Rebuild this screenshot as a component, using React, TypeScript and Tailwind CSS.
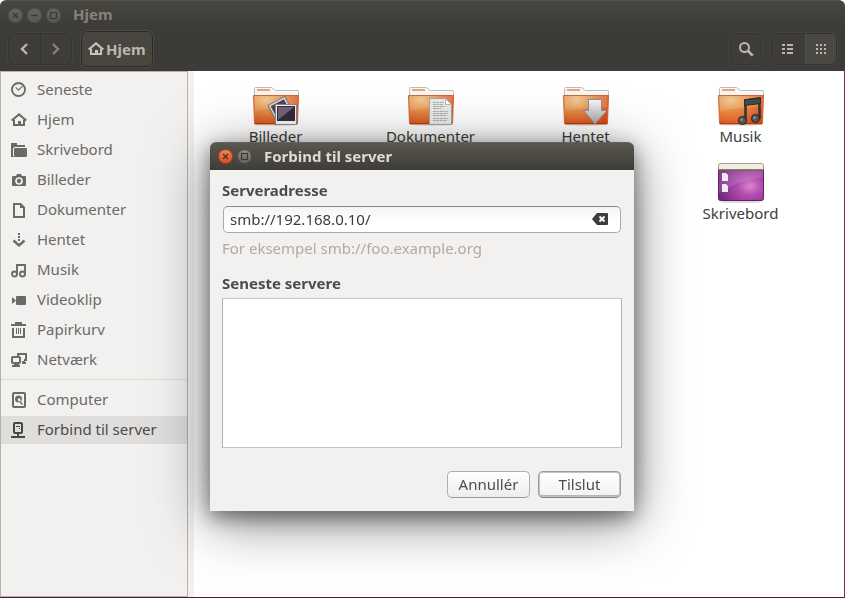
import { useState } from "react";
import type { ReactNode } from "react";

const INK = "#6a6a67";

function Glyph({ children, color = INK }: { children: ReactNode; color?: string }) {
  return (
    <svg width="16" height="16" viewBox="0 0 16 16" fill="none" stroke={color} strokeWidth="2" className="shrink-0" aria-hidden="true">
      {children}
    </svg>
  );
}

function HomeGlyph({ color = INK }: { color?: string }) {
  return (
    <Glyph color={color}>
      <path d="M.6 8.500 8 2.400l7.400 6.100" />
      <path d="M3 7.500V13h10V7.500" />
      <rect x="7" y="9" width="3" height="4" fill={color} stroke="none" />
    </Glyph>
  );
}

const glyphs = {
  recent: (
    <Glyph>
      <circle cx="7.500" cy="7.500" r="6.500" strokeWidth="1.900" />
      <path d="m4.700 5.300 2.800 2.800 4-4" strokeWidth="1.200" />
    </Glyph>
  ),
  home: <HomeGlyph />,
  folder: (
    <Glyph>
      <path d="M0 1h6v2h8v2H3v10H0z" fill={INK} stroke="none" />
      <rect x="3" y="6" width="13" height="9" rx="1" fill={INK} stroke="none" />
      <path d="M2.500 6v8" stroke="#f2f1f0" strokeWidth="1" />
    </Glyph>
  ),
  camera: (
    <Glyph>
      <path d="M2 4h3l1-2h4l1 2h3a1 1 0 0 1 1 1v8a1 1 0 0 1-1 1H2a1 1 0 0 1-1-1V5a1 1 0 0 1 1-1z" fill={INK} stroke="none" />
      <circle cx="8" cy="9" r="3" stroke="#f2f1f0" strokeWidth="1.700" />
    </Glyph>
  ),
  document: (
    <Glyph>
      <path d="M3 2h6.500L13 5.500V15H3z" />
      <path d="M9 1v5h5z" fill={INK} stroke="none" />
    </Glyph>
  ),
  download: (
    <Glyph>
      <path d="M7 1h2v2H7zM7 4h2v2H7zM7 7h2v2H7z" fill={INK} stroke="none" />
      <path d="m2.500 8.500 5.500 5 5.500-5" strokeWidth="2.400" />
    </Glyph>
  ),
  music: (
    <Glyph>
      <path d="M6 12V3h8v9M6 3h8" strokeWidth="1.900" />
      <circle cx="3.500" cy="12" r="2.500" strokeWidth="1.900" />
      <circle cx="11.500" cy="12" r="2.500" strokeWidth="1.900" />
    </Glyph>
  ),
  video: (
    <Glyph>
      <rect x="5" y="4" width="10" height="9" rx="1" fill={INK} stroke="none" />
      <path d="M1 5v7l4-3.500z" fill={INK} stroke="none" />
    </Glyph>
  ),
  trash: (
    <Glyph>
      <path d="M0 3h15M4 1h7" />
      <path d="M2 6v9h11V6" />
      <path d="M5.500 6v6M7.500 6v6M9.500 6v6" strokeWidth="1" />
    </Glyph>
  ),
  network: (
    <Glyph>
      <path d="M7 4V2h8v6h-2" />
      <rect x="1" y="5" width="8" height="6" rx="1" />
      <path d="M3 12h5v1h1v2H1v-2h2zM11 9h3v1h1v2h-4z" fill={INK} stroke="none" />
    </Glyph>
  ),
  computer: (
    <Glyph>
      <rect x="2" y="1" width="12" height="14" rx="1" />
      <circle cx="7.500" cy="7" r="3.500" fill={INK} stroke="none" />
      <circle cx="8" cy="7.500" r="1.200" fill="#f2f1f0" stroke="none" />
      <path d="m8 8 3.500 4.500" stroke="#f2f1f0" strokeWidth="2.600" />
      <path d="m8.500 9 3 3.500" strokeWidth="1.400" />
    </Glyph>
  ),
  server: (
    <Glyph color="#464643">
      <rect x="3" y="1" width="8" height="10" rx="1" />
      <path d="M5 4.500h4" strokeWidth="1" />
      <path d="M8 6h1v1H8z" fill="#464643" stroke="none" />
      <path d="M7 11v4M0 15h14" />
    </Glyph>
  ),
};

type GlyphName = keyof typeof glyphs;

const places: { label: string; glyph: GlyphName }[] = [
  { label: "Seneste", glyph: "recent" },
  { label: "Hjem", glyph: "home" },
  { label: "Skrivebord", glyph: "folder" },
  { label: "Billeder", glyph: "camera" },
  { label: "Dokumenter", glyph: "document" },
  { label: "Hentet", glyph: "download" },
  { label: "Musik", glyph: "music" },
  { label: "Videoklip", glyph: "video" },
  { label: "Papirkurv", glyph: "trash" },
  { label: "Netværk", glyph: "network" },
];

const devices: { label: string; glyph: GlyphName; active?: boolean }[] = [
  { label: "Computer", glyph: "computer" },
  { label: "Forbind til server", glyph: "server", active: true },
];

function PlaceRow({ label, glyph, active }: { label: string; glyph: GlyphName; active?: boolean }) {
  return (
    <li>
      <button
        type="button"
        className={`flex h-7 w-full items-center gap-2.5 pl-2.5 text-left ${active ? "bg-[#dfdedd] text-[#4a4a48]" : "text-[#6a6a67]"}`}
      >
        {glyphs[glyph]}
        <span className="pb-0.5">{label}</span>
      </button>
    </li>
  );
}

function WindowButton({ kind, tone }: { kind: "close" | "minimize" | "maximize"; tone: "dim" | "grey" | "orange" }) {
  const names = { close: "Luk", minimize: "Minimér", maximize: "Maksimér" };
  const fills = {
    dim: "from-[#66645e] to-[#5a5852] border-[#55534d]",
    grey: "from-[#8f8d85] to-[#66645d] border-[#4a4943]",
    orange: "from-[#f58059] to-[#de4a1c] border-[#a8401d]",
  };
  return (
    <button type="button" aria-label={names[kind]} className={`flex size-[15px] items-center justify-center rounded-full border bg-linear-to-b ${fills[tone]}`}>
      <svg width="13" height="13" viewBox="0 0 13 13" className="shrink-0" fill="none" stroke="#3a3934" strokeWidth="1.200" aria-hidden="true">
        {kind === "close" && <path d="m4 4 5 5m0-5-5 5" />}
        {kind === "minimize" && <path d="M3 6.500h7" />}
        {kind === "maximize" && <rect x="3.500" y="3.500" width="6" height="6" />}
      </svg>
    </button>
  );
}

function FolderArt({ id, children }: { id: string; children: ReactNode }) {
  return (
    <svg width="48" height="40" viewBox="0 0 48 40" aria-hidden="true">
      <defs>
        <radialGradient id={id} cx="0.28" cy="0.15" r="0.95">
          <stop offset="0" stopColor="#f2c183" />
          <stop offset="0.4" stopColor="#e58d47" />
          <stop offset="1" stopColor="#d9491a" />
        </radialGradient>
      </defs>
      <ellipse cx="24" cy="38.500" rx="22" ry="1.500" fill="#000" opacity=".12" />
      <path d="M2.500 10V2.500Q2.500 1.500 3.500 1.500h16l4 3H46q.5 0 .5 1V10z" fill="#f7f7f7" stroke="#bcbcbc" />
      <rect x="5" y="3" width="13" height="2" fill="#f0a070" />
      <path d="M1.500 9.500h45l-1 27.500q0 1-1 1h-41q-1 0-1-1z" fill={`url(#${id})`} stroke="#cf6632" />
      <path d="M2.500 10h43l-.5 11Q22 21 3 25z" fill="#fff" opacity=".13" />
      <path d="M3 37.500h42" stroke="#b03c10" />
      {children}
    </svg>
  );
}

function PicturesArt() {
  return (
    <FolderArt id="folder-pictures">
      <g transform="rotate(-28 27 22)">
        <rect x="18.500" y="14.500" width="19" height="19" fill="#d8d8d8" stroke="#777" />
        <rect x="20.500" y="16.500" width="15" height="13" fill="#54435a" />
      </g>
      <rect x="23.500" y="18.500" width="21" height="20" fill="#f6f6f6" stroke="#888" />
      <rect x="25" y="20" width="18" height="15" fill="#352c3b" />
      <path d="M26 21h16L26 34z" fill="#77617c" />
    </FolderArt>
  );
}

function DocumentsArt() {
  return (
    <FolderArt id="folder-documents">
      <path d="M22.500 12.500h16l6 6v20h-22z" fill="#e9e9e7" stroke="#a4a4a2" />
      <path d="m38.500 12.500 6 6h-6z" fill="#fff" stroke="#b6b6b4" />
      <path d="M26 16.500h11M26 18.500h10M26 20.500h12M26 22.500h8M26 25.500h15M26 27.500h15M26 29.500h14M26 32.500h15M26 34.500h14" stroke="#b0b0ae" strokeDasharray="3 .5" />
    </FolderArt>
  );
}

function DownloadsArt() {
  return (
    <FolderArt id="folder-downloads">
      <defs>
        <linearGradient id="arrow-down" x1="0" y1="0" x2="0" y2="1">
          <stop offset="0" stopColor="#f8f8f8" />
          <stop offset="1" stopColor="#a5a5a5" />
        </linearGradient>
      </defs>
      <path d="M26.500 13.500h13v11H45l-12 13.500-11.500-13.500h5z" fill="url(#arrow-down)" stroke="#8d8d8d" />
    </FolderArt>
  );
}

function MusicArt() {
  return (
    <FolderArt id="folder-music">
      <path d="M28.500 35V14.500L42.500 12.500V33" fill="none" stroke="#343434" strokeWidth="2.600" />
      <path d="M27.500 14 43.500 12v5.500l-16 2z" fill="#484848" stroke="#2a2a2a" />
      <circle cx="25.500" cy="34.500" r="4" fill="#555" stroke="#222" />
      <circle cx="38.500" cy="32.500" r="4" fill="#555" stroke="#222" />
      <circle cx="24.500" cy="33.500" r="1.500" fill="#8a8a8a" />
      <circle cx="37.500" cy="31.500" r="1.500" fill="#8a8a8a" />
    </FolderArt>
  );
}

function DesktopArt() {
  return (
    <svg width="48" height="40" viewBox="0 0 48 40" aria-hidden="true">
      <defs>
        <radialGradient id="desktop" cx="0.7" cy="0.6" r="0.75">
          <stop offset="0" stopColor="#d888c8" />
          <stop offset="0.35" stopColor="#b44db0" />
          <stop offset="1" stopColor="#6c2678" />
        </radialGradient>
      </defs>
      <ellipse cx="24" cy="38.800" rx="22" ry="1.200" fill="#000" opacity=".15" />
      <rect x="1.500" y="1.500" width="45" height="36" rx="2" fill="url(#desktop)" stroke="#6a1d6b" />
      <path d="M2 7h44v7Q22 17 2 30z" fill="#fff" opacity=".13" />
      <path d="M1.500 6.500v-4q0-2 2-2h41q2 0 2 2v4z" fill="#efeee0" stroke="#a3a18a" />
      <path d="M1 7h46" stroke="#6d5c48" />
      <path d="M5 10h4l2 2v6H5zM5 21h4l2 2v6H5z" fill="#efeaf0" />
    </svg>
  );
}

const files: { label: string; art: ReactNode; place?: string }[] = [
  { label: "Billeder", art: <PicturesArt /> },
  { label: "Dokumenter", art: <DocumentsArt /> },
  { label: "Hentet", art: <DownloadsArt /> },
  { label: "Musik", art: <MusicArt /> },
  { label: "Skrivebord", art: <DesktopArt />, place: "col-start-4" },
];

function Header() {
  return (
    <header className="rounded-t-md border-t border-[#55534d] bg-linear-to-b from-[#474640] to-[#3c3b37] to-40%">
      <div className="flex h-7 items-center gap-1 pl-2">
        <WindowButton kind="close" tone="dim" />
        <WindowButton kind="minimize" tone="dim" />
        <WindowButton kind="maximize" tone="dim" />
        <h1 className="pb-0.5 pl-2 font-bold text-[#85827a]">Hjem</h1>
      </div>
      <nav className="flex h-[42px] items-center gap-[9px] px-2 pb-0.5">
        <div className="flex h-8 w-16 divide-x divide-[#34332f] rounded-md border border-[#34332f] bg-[#3e3d39] shadow-[0_0_0_1px_#45443f]">
          <button type="button" aria-label="Tilbage" className="flex flex-1 items-center justify-center">
            <svg width="8" height="12" viewBox="0 0 8 12" fill="none" stroke="#bbb7ac" strokeWidth="2.400" aria-hidden="true"><path d="M7 1 2 6l5 5" /></svg>
          </button>
          <button type="button" aria-label="Frem" className="flex flex-1 items-center justify-center">
            <svg width="8" height="12" viewBox="0 0 8 12" fill="none" stroke="#85827a" strokeWidth="2.400" aria-hidden="true"><path d="m1 1 5 5-5 5" /></svg>
          </button>
        </div>
        <button type="button" className="flex h-9 items-center gap-0.5 rounded-md border border-[#2b2a27] bg-[#474640] px-1.5 font-bold text-[#bbb7ac] shadow-[0_0_0_1px_#4b4a44]">
          <HomeGlyph color="#c6c2b7" />
          <span>Hjem</span>
        </button>
        <button type="button" aria-label="Søg" className="ml-auto flex h-8 w-8 items-center justify-center rounded-md border border-[#34332f] bg-[#3e3d39] shadow-[0_0_0_1px_#45443f]">
          <svg width="16" height="16" viewBox="0 0 16 16" fill="none" stroke="#bbb7ac" aria-hidden="true">
            <circle cx="6.500" cy="6.500" r="4.500" strokeWidth="2" />
            <path d="m9.700 9.700 5 5" strokeWidth="2.600" />
          </svg>
        </button>
        <div className="flex h-8 w-[66px] overflow-hidden rounded-md border border-[#34332f] bg-[#3e3d39] shadow-[0_0_0_1px_#45443f]">
          <button type="button" aria-label="Listevisning" className="flex flex-1 items-center justify-center pr-0.5">
            <svg width="11" height="10" viewBox="0 0 11 10" fill="#bbb7ac" aria-hidden="true">
              <path d="M0 0h3v2H0zM5 0h6v2H5zM0 4h3v2H0zM5 4h6v2H5zM0 8h3v2H0zM5 8h6v2H5z" />
            </svg>
          </button>
          <button type="button" aria-label="Ikonvisning" aria-pressed="true" className="flex flex-1 items-center justify-center border-l border-[#55534b] bg-[#494842]">
            <svg width="10" height="10" viewBox="0 0 10 10" fill="#bbb7ac" aria-hidden="true">
              <path d="M0 0h2v2H0zM4 0h2v2H4zM8 0h2v2H8zM0 4h2v2H0zM4 4h2v2H4zM8 4h2v2H8zM0 8h2v2H0zM4 8h2v2H4zM8 8h2v2H8z" />
            </svg>
          </button>
        </div>
      </nav>
    </header>
  );
}

function ConnectDialog() {
  const [address, setAddress] = useState("smb://192.168.0.10/");
  return (
    <div className="fixed inset-0 flex items-start justify-center pt-[142px] pr-px">
      <section
        role="dialog"
        aria-labelledby="dialog-title"
        className="w-full max-w-[424px] rounded-t-md bg-[#f2f1f0] shadow-[0_10px_56px_rgba(0,0,0,0.5),0_6px_20px_rgba(0,0,0,0.45)]"
      >
        <div className="flex h-7 items-center gap-1 rounded-t-md border-t border-[#66645a] bg-linear-to-b from-[#59574e] to-[#3d3c37] pl-2">
          <WindowButton kind="close" tone="orange" />
          <WindowButton kind="maximize" tone="grey" />
          <h2 id="dialog-title" className="pb-0.5 pl-2 font-bold text-[#dfdbd2]">Forbind til server</h2>
        </div>
        <form className="flex flex-col px-3 pt-[11px] pb-[13px]" onSubmit={(event) => event.preventDefault()}>
          <label htmlFor="address" className="font-bold text-[#4c4c4c]">Serveradresse</label>
          <div className="mx-px mt-[7px] flex h-[27px] items-center rounded-[5px] border border-[#aaa9a5] border-t-[#8d8c88] bg-linear-to-b from-[#f4f4f4] to-white to-60% pr-3 pl-1.5">
            <input
              id="address"
              type="text"
              value={address}
              onChange={(event) => setAddress(event.target.value)}
              className="min-w-0 flex-1 bg-transparent pb-0.5 text-[#3c3c3c] outline-none"
            />
            <button type="button" aria-label="Ryd" className="pb-0.5" onClick={() => setAddress("")}>
              <svg width="16" height="12" viewBox="0 0 16 12" aria-hidden="true">
                <path d="M0 6 5 0h10q1 0 1 1v10q0 1-1 1H5z" fill="#3c3c3c" />
                <path d="m7.500 3.500 5 5m0-5-5 5" stroke="#fff" strokeWidth="2" />
              </svg>
            </button>
          </div>
          <p className="mt-1.5 text-[#b4aa9d]">For eksempel smb://foo.example.org</p>
          <h3 className="mt-[17px] font-bold text-[#4c4c4c]">Seneste servere</h3>
          <div className="mt-1.5 h-[150px] border border-[#c5c4c0] border-r-[#b3b2af] border-l-[#b3b2af] bg-white" />
          <div className="mx-px mt-[23px] flex justify-end gap-2">
            <button type="button" className="h-[27px] w-[83px] rounded-[5px] border border-[#b0afac] border-b-[#999895] bg-linear-to-b from-white to-[#ededec] pb-0.5 text-[#4c4c4c]">
              Annullér
            </button>
            <button type="submit" className="h-[27px] w-[83px] rounded-[5px] border border-[#9d9c99] border-b-[#858481] bg-linear-to-b from-white to-[#f2f2f1] pb-0.5 text-[#4c4c4c] shadow-[inset_0_0_0_1px_#c4c3c1,inset_0_-2px_0_#b5b4b1]">
              Tilslut
            </button>
          </div>
        </form>
      </section>
    </div>
  );
}

export default function App() {
  return (
    <div className="flex min-h-screen flex-col bg-white font-['Noto_Sans',sans-serif] text-[15px] leading-[18px]">
      <Header />
      <div className="flex flex-1 border-r border-b border-r-[#8c2b3b] border-b-[#4f1a35]">
        <aside className="w-[188px] shrink-0 border border-[#b5b2ad] bg-[#f2f1f0] pt-1">
          <ul className="flex flex-col gap-0.5">
            {places.map((place) => (
              <PlaceRow key={place.label} {...place} />
            ))}
          </ul>
          <hr className="mt-[5px] mb-1.5 border-[#d9d8d5]" />
          <ul className="flex flex-col gap-0.5">
            {devices.map((device) => (
              <PlaceRow key={device.label} {...device} />
            ))}
          </ul>
        </aside>
        <main className="flex-1 border-l-6 border-[#f2f1f0] pt-[15px] pr-[26px] pl-1">
          <ul className="grid grid-cols-4 gap-y-[18px]">
            {files.map((file) => (
              <li key={file.label} className={`flex flex-col items-center gap-px text-[#3c3c3c] ${file.place ?? ""}`}>
                {file.art}
                {file.label}
              </li>
            ))}
          </ul>
        </main>
      </div>
      <ConnectDialog />
    </div>
  );
}
